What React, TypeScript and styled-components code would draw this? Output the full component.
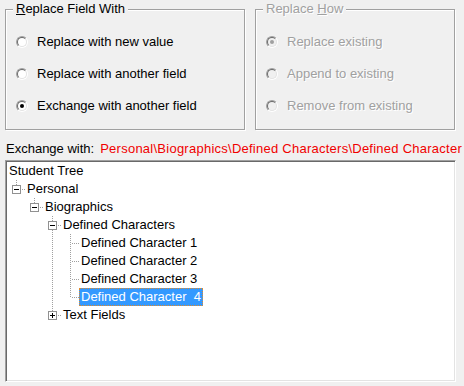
import React from "react";
import styled, { createGlobalStyle, css } from "styled-components";

const Global = createGlobalStyle`
  html, body { margin: 0; padding: 0; background: #f0f0f0; }
  body { font-family: "Liberation Sans", Arial, sans-serif; font-size: 13px; color: #000; }
`;

const Page = styled.div`
  width: 464px;
  height: 386px;
  box-sizing: border-box;
  padding: 9px 0 0 5px;
  overflow: hidden;
  background: #f0f0f0;
`;

const TopRow = styled.div`
  display: flex;
  gap: 10px;
`;

const GroupBox = styled.div<{ $w: number }>`
  position: relative;
  box-sizing: border-box;
  width: ${(p) => p.$w}px;
  height: 121px;
  border: 1px solid #a0a0a0;
  box-shadow: inset 1px 1px 0 #fff, 1px 1px 0 #fff;
  padding: 24px 0 0 10px;
  display: flex;
  flex-direction: column;
  gap: 16px;
`;

const GroupLabel = styled.span<{ $disabled?: boolean }>`
  position: absolute;
  top: -9px;
  left: 7px;
  padding: 0 3px;
  line-height: 16px;
  background: #f0f0f0;
  white-space: nowrap;
  ${(p) =>
    p.$disabled &&
    css`
      color: #a0a0a0;
      text-shadow: 1px 1px 0 #fff;
    `}
`;

const RadioRow = styled.div<{ $disabled?: boolean }>`
  display: flex;
  align-items: center;
  height: 16px;
  line-height: 16px;
  white-space: nowrap;
  ${(p) =>
    p.$disabled &&
    css`
      color: #a0a0a0;
      text-shadow: 1px 1px 0 #fff;
    `}
`;

const RadioOuter = styled.span`
  box-sizing: border-box;
  width: 12px;
  height: 12px;
  border-radius: 50%;
  border: 1px solid;
  border-color: #a0a0a0 #fff #fff #a0a0a0;
  margin-right: 9px;
  flex: none;
  display: flex;
`;

const RadioInner = styled.span<{ $disabled?: boolean }>`
  box-sizing: border-box;
  width: 10px;
  height: 10px;
  border-radius: 50%;
  border: 1px solid;
  border-color: #696969 #e3e3e3 #e3e3e3 #696969;
  background: ${(p) => (p.$disabled ? "#f0f0f0" : "#fff")};
  display: flex;
  align-items: center;
  justify-content: center;
`;

const RadioDot = styled.span<{ $disabled?: boolean }>`
  width: 4px;
  height: 4px;
  border-radius: 50%;
  background: ${(p) => (p.$disabled ? "#a0a0a0" : "#000")};
`;

const Radio = ({ label, checked, disabled }: { label: string; checked?: boolean; disabled?: boolean }) => (
  <RadioRow $disabled={disabled}>
    <RadioOuter>
      <RadioInner $disabled={disabled}>{checked && <RadioDot $disabled={disabled} />}</RadioInner>
    </RadioOuter>
    {label}
  </RadioRow>
);

const ExchangeRow = styled.div`
  margin-top: 11px;
  margin-bottom: 3px;
  height: 16px;
  line-height: 16px;
  padding-left: 1px;
  display: flex;
  gap: 6px;
  white-space: nowrap;
  overflow: hidden;
`;

const PathText = styled.span`
  color: #f00000;
  white-space: pre;
  letter-spacing: 0.25px;
`;

const TreePanel = styled.div`
  box-sizing: border-box;
  width: 451px;
  height: 222px;
  background: #fff;
  border: 1px solid;
  border-color: #a0a0a0 #fff #fff #a0a0a0;
  box-shadow: inset 1px 1px 0 #696969, inset -1px -1px 0 #e3e3e3;
  padding: 1px 0 0 1px;
  overflow: hidden;
`;

const TreeRow = styled.div`
  display: flex;
  height: 18px;
`;

const dotV = css`
  background-image: linear-gradient(to bottom, #a0a0a0 50%, transparent 50%);
  background-size: 1px 2px;
`;

const dotH = css`
  background-image: linear-gradient(to right, #a0a0a0 50%, transparent 50%);
  background-size: 2px 1px;
`;

const IndentCell = styled.span<{ $line?: boolean }>`
  position: relative;
  width: 18px;
  height: 18px;
  flex: none;
  ${(p) =>
    p.$line &&
    css`
      &::before {
        content: "";
        position: absolute;
        left: 9px;
        top: 0;
        width: 1px;
        height: 18px;
        ${dotV}
      }
    `}
`;

const ConnectorCell = styled.span<{ $last?: boolean }>`
  position: relative;
  width: 18px;
  height: 18px;
  flex: none;
  &::before {
    content: "";
    position: absolute;
    left: 9px;
    top: 0;
    width: 1px;
    height: ${(p) => (p.$last ? "10px" : "18px")};
    ${dotV}
  }
  &::after {
    content: "";
    position: absolute;
    left: 11px;
    top: 9px;
    width: 7px;
    height: 1px;
    ${dotH}
  }
`;

const Expander = styled.span<{ $plus?: boolean }>`
  position: absolute;
  z-index: 1;
  left: 5px;
  top: 5px;
  box-sizing: border-box;
  width: 9px;
  height: 9px;
  border: 1px solid #919191;
  background: #fff;
  &::before {
    content: "";
    position: absolute;
    left: 1px;
    top: 3px;
    width: 5px;
    height: 1px;
    background: #000;
  }
  ${(p) =>
    p.$plus &&
    css`
      &::after {
        content: "";
        position: absolute;
        left: 3px;
        top: 1px;
        width: 1px;
        height: 5px;
        background: #000;
      }
    `}
`;

const NodeLabel = styled.span<{ $selected?: boolean }>`
  box-sizing: border-box;
  height: 18px;
  line-height: 16px;
  padding: 0 1px;
  border: 1px solid transparent;
  white-space: pre;
  ${(p) =>
    p.$selected &&
    css`
      background: #3399ff;
      color: #fff;
      border: 1px dotted #e08a2c;
    `}
`;

type Node = {
  label: string;
  guides: boolean[];
  connector?: "tee" | "elbow";
  expander?: "minus" | "plus";
  selected?: boolean;
};

const nodes: Node[] = [
  { label: "Student Tree", guides: [] },
  { label: "Personal", guides: [], connector: "elbow", expander: "minus" },
  { label: "Biographics", guides: [false], connector: "elbow", expander: "minus" },
  { label: "Defined Characters", guides: [false, false], connector: "tee", expander: "minus" },
  { label: "Defined Character 1", guides: [false, false, true], connector: "tee" },
  { label: "Defined Character 2", guides: [false, false, true], connector: "tee" },
  { label: "Defined Character 3", guides: [false, false, true], connector: "tee" },
  { label: "Defined Character  4", guides: [false, false, true], connector: "elbow", selected: true },
  { label: "Text Fields", guides: [false, false], connector: "elbow", expander: "plus" },
];

export default function App() {
  return (
    <Page>
      <Global />
      <TopRow>
        <GroupBox $w={240}>
          <GroupLabel>
            <u>R</u>eplace Field With
          </GroupLabel>
          <Radio label="Replace with new value" />
          <Radio label="Replace with another field" />
          <Radio label="Exchange with another field" checked />
        </GroupBox>
        <GroupBox $w={200}>
          <GroupLabel $disabled>
            Replace <u>H</u>ow
          </GroupLabel>
          <Radio label="Replace existing" checked disabled />
          <Radio label="Append to existing" disabled />
          <Radio label="Remove from existing" disabled />
        </GroupBox>
      </TopRow>
      <ExchangeRow>
        <span>Exchange with:</span>
        <PathText>{"Personal\\Biographics\\Defined Characters\\Defined Character  4"}</PathText>
      </ExchangeRow>
      <TreePanel>
        {nodes.map((n) => (
          <TreeRow key={n.label}>
            {n.guides.map((g, i) => (
              <IndentCell key={i} $line={g} />
            ))}
            {n.connector && (
              <ConnectorCell $last={n.connector === "elbow"}>
                {n.expander && <Expander $plus={n.expander === "plus"} />}
              </ConnectorCell>
            )}
            <NodeLabel $selected={n.selected}>{n.label}</NodeLabel>
          </TreeRow>
        ))}
      </TreePanel>
    </Page>
  );
}
